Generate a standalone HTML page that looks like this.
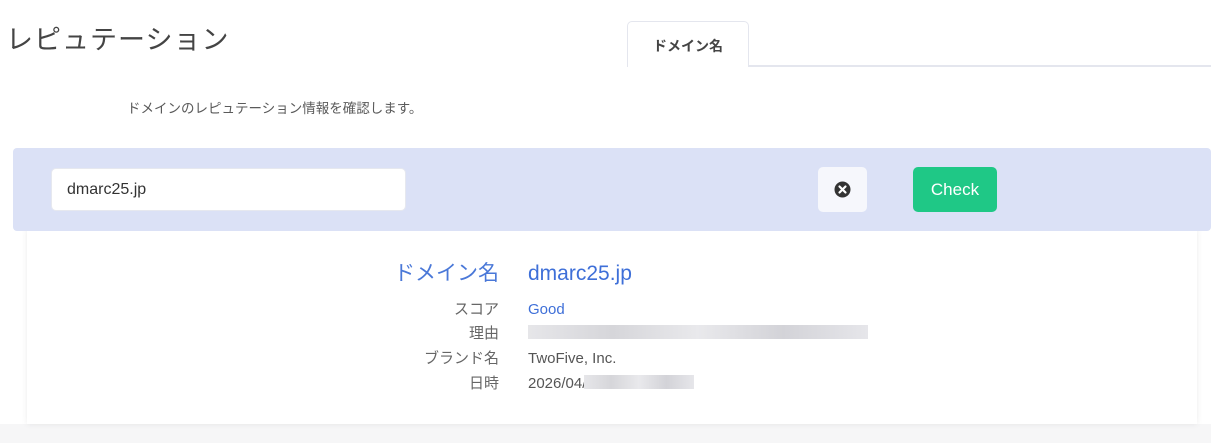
<!DOCTYPE html>
<html><head><meta charset="utf-8"><style>
*{margin:0;padding:0;box-sizing:border-box}
body{width:1211px;height:443px;background:#fff;font-family:"Liberation Sans","Noto Sans CJK JP",sans-serif;position:relative;overflow:hidden;color:#555}
.abs{position:absolute}
h1{position:absolute;left:6px;top:18px;font-size:27px;font-weight:400;color:#444;letter-spacing:1px}
.tabline{left:627px;top:65px;width:584px;height:2px;background:#e4e6ee}
.tab{left:627px;top:21px;width:122px;height:46px;border:1px solid #e4e6ee;border-bottom:none;border-radius:5px 5px 0 0;background:#fff;font-size:14px;font-weight:bold;color:#444;text-align:center;line-height:48px}
.desc{left:127px;top:97px;font-size:13.5px;color:#5a5a5a}
.bottom{left:0;top:424px;width:1211px;height:19px;background:#f6f6f7}
.card{left:27px;top:228px;width:1170px;height:196px;background:#fff;box-shadow:0 0 6px rgba(0,0,0,.08)}
.bar{left:13px;top:148px;width:1198px;height:83px;background:#dbe1f6;border-radius:4px}
.inp{left:51px;top:168px;width:355px;height:43px;background:#fff;border-radius:5px;border:1px solid #e6e8ef;font-size:16px;color:#333;padding-left:15px;line-height:42px}
.xbtn{left:818px;top:167px;width:49px;height:45px;background:#f6f7fc;border-radius:5px}
.chk{left:913px;top:167px;width:84px;height:45px;background:#1fc886;border-radius:5px;color:#fff;font-size:17px;text-align:center;line-height:45px}
.lab{right:712px;text-align:right;color:#666;font-size:15px;line-height:20px;height:20px}
.val{left:528px;font-size:15px;color:#555;line-height:20px;height:20px}
.blur{background:linear-gradient(90deg,#e6e6e9,#d6d6da,#e9e9ec,#d3d3d8,#e6e6ea);height:14px}
</style></head><body>
<h1>レピュテーション</h1>
<div class="abs tabline"></div>
<div class="abs tab">ドメイン名</div>
<div class="abs desc">ドメインのレピュテーション情報を確認します。</div>
<div class="abs bottom"></div>
<div class="abs card"></div>
<div class="abs bar"></div>
<div class="abs inp">dmarc25.jp</div>
<div class="abs xbtn"><svg width="49" height="45"><circle cx="24.5" cy="22.5" r="8" fill="#333"/><path d="M21.5 19.5l6 6M27.5 19.5l-6 6" stroke="#fff" stroke-width="2.2" stroke-linecap="round"/></svg></div>
<div class="abs chk">Check</div>
<div class="abs lab" style="top:260px;font-size:21px;line-height:28px;height:28px;color:#4a78d8">ドメイン名</div>
<div class="abs val" style="top:260px;font-size:21px;line-height:28px;height:28px;color:#3e6fd8">dmarc25.jp</div>
<div class="abs lab" style="top:300px">スコア</div>
<div class="abs val" style="top:300px;color:#3e6fd8">Good</div>
<div class="abs lab" style="top:324px">理由</div>
<div class="abs val blur" style="top:325px;width:340px"></div>
<div class="abs lab" style="top:349px">ブランド名</div>
<div class="abs val" style="top:349px">TwoFive, Inc.</div>
<div class="abs lab" style="top:374px">日時</div>
<div class="abs val" style="top:374px">2026/04/</div>
<div class="abs blur" style="left:584px;top:375px;width:110px"></div>
</body></html>
